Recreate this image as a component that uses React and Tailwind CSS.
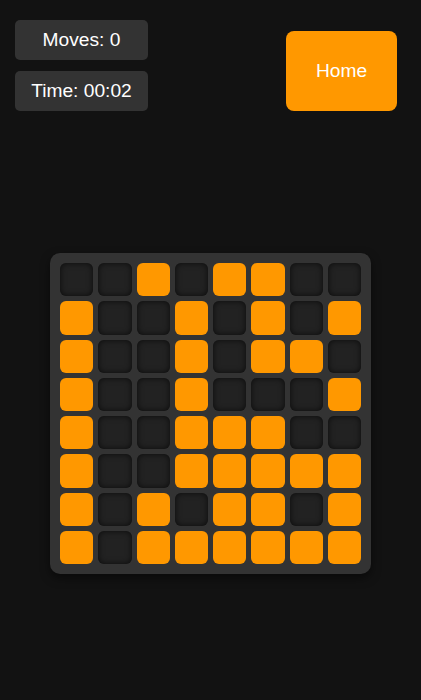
import React from "react";

const board = [
  [0, 0, 1, 0, 1, 1, 0, 0],
  [1, 0, 0, 1, 0, 1, 0, 1],
  [1, 0, 0, 1, 0, 1, 1, 0],
  [1, 0, 0, 1, 0, 0, 0, 1],
  [1, 0, 0, 1, 1, 1, 0, 0],
  [1, 0, 0, 1, 1, 1, 1, 1],
  [1, 0, 1, 0, 1, 1, 0, 1],
  [1, 0, 1, 1, 1, 1, 1, 1],
];

export default function App() {
  return (
    <div
      className="min-h-screen bg-[#121212] text-white flex flex-col"
      style={{ fontFamily: '"Liberation Sans", Arial, sans-serif' }}
    >
      <div className="h-[127px] flex justify-between items-start pl-[15px] pr-[24px]">
        <div className="flex flex-col gap-[11px] pt-[20px]">
          <div className="w-[133px] h-[40px] bg-[#333] rounded-[5px] flex items-center justify-center text-[19.2px]">
            Moves: 0
          </div>
          <div className="w-[133px] h-[40px] bg-[#333] rounded-[5px] flex items-center justify-center text-[19.2px]">
            Time: 00:02
          </div>
        </div>
        <button className="mt-[31px] w-[111px] h-[80px] bg-[#ff9800] rounded-[8px] text-white text-[19.2px]">
          Home
        </button>
      </div>

      <div className="flex-1 flex items-center justify-center">
        <div className="w-[321px] p-[10px] bg-[#333] rounded-[10px] shadow-[0_4px_10px_rgba(0,0,0,0.5)] grid grid-cols-8 gap-[5px]">
          {board.flat().map((v, i) => (
            <div
              key={i}
              className={
                v
                  ? "aspect-square rounded-[6px] bg-[#ff9800]"
                  : "aspect-square rounded-[6px] bg-[#222] shadow-[inset_0_0_6px_rgba(0,0,0,0.7)]"
              }
            />
          ))}
        </div>
      </div>
    </div>
  );
}
